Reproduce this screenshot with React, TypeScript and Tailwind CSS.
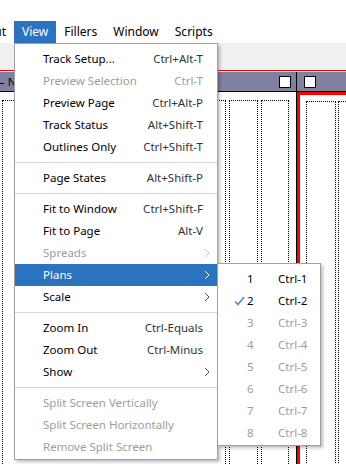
import React from 'react';

type Item =
  | { sep: true }
  | { label: string; keys?: string; disabled?: boolean; sub?: boolean; active?: boolean };

const viewItems: Item[] = [
  { label: 'Track Setup...', keys: 'Ctrl+Alt-T' },
  { label: 'Preview Selection', keys: 'Ctrl-T', disabled: true },
  { label: 'Preview Page', keys: 'Ctrl+Alt-P' },
  { label: 'Track Status', keys: 'Alt+Shift-T' },
  { label: 'Outlines Only', keys: 'Ctrl+Shift-T' },
  { sep: true },
  { label: 'Page States', keys: 'Alt+Shift-P' },
  { sep: true },
  { label: 'Fit to Window', keys: 'Ctrl+Shift-F' },
  { label: 'Fit to Page', keys: 'Alt-V' },
  { label: 'Spreads', sub: true, disabled: true },
  { label: 'Plans', sub: true, active: true },
  { label: 'Scale', sub: true },
  { sep: true },
  { label: 'Zoom In', keys: 'Ctrl-Equals' },
  { label: 'Zoom Out', keys: 'Ctrl-Minus' },
  { label: 'Show', sub: true },
  { sep: true },
  { label: 'Split Screen Vertically', disabled: true },
  { label: 'Split Screen Horizontally', disabled: true },
  { label: 'Remove Split Screen', disabled: true },
];

// plans submenu: 1 and 2 enabled, 2 is checked
const plans = [1, 2, 3, 4, 5, 6, 7, 8];

const Chevron = ({ color }: { color: string }) => (
  <svg width="6" height="10" viewBox="0 0 6 10" className="absolute right-[7px] top-[6px]">
    <path d="M1 1l4 4-4 4" fill="none" stroke={color} strokeWidth="1" />
  </svg>
);

const MenuRow = ({ item }: { item: Item }) => {
  if ('sep' in item) {
    return (
      <div className="h-[9px] flex items-center">
        <div className="h-px w-full bg-[#d7d7d7]" />
      </div>
    );
  }
  const text = item.active ? 'text-white' : item.disabled ? 'text-[#9d9d9d]' : 'text-black';
  const keyText = item.active ? 'text-white' : item.disabled ? 'text-[#9d9d9d]' : 'text-[#333333]';
  return (
    <div
      className={`relative h-[22px] flex items-center justify-between pl-[28px] pr-[14px] ${
        item.active ? 'bg-[#2b73bf]' : ''
      }`}
    >
      <span className={text}>{item.label}</span>
      {item.keys && <span className={keyText}>{item.keys}</span>}
      {item.sub && <Chevron color={item.active ? '#ffffff' : item.disabled ? '#c4c4c4' : '#555555'} />}
    </div>
  );
};

const DotCol = ({ w, className = '' }: { w: string; className?: string }) => (
  <div className={`${w} shrink-0 h-[400px] border-t border-l border-r border-dotted border-black ${className}`} />
);

export default function App() {
  return (
    <div
      className="relative w-[346px] h-[464px] overflow-hidden bg-white text-[11.5px] leading-none"
      style={{ fontFamily: '"Noto Sans", "Open Sans", sans-serif' }}
    >
      {/* title strip */}
      <div className="h-[21px] bg-white" />

      {/* menu bar */}
      <div className="h-[22px] flex items-center bg-white text-black text-[12px]">
        <div className="w-[14px] h-full overflow-hidden flex justify-end items-center pr-2">
          <span className="shrink-0">Layout</span>
        </div>
        <div className="h-full px-2 flex items-center bg-[#2b73bf] text-white">View</div>
        <div className="h-full px-2 flex items-center">Fillers</div>
        <div className="h-full px-2 flex items-center">Window</div>
        <div className="h-full px-2 flex items-center">Scripts</div>
      </div>

      {/* toolbar */}
      <div className="h-[27px] bg-[#f0f0f0]" />
      <div className="h-px bg-[#ff0000]" />
      <div className="h-px bg-[#f0f0f0]" />

      {/* page header bar */}
      <div className="h-[19px] bg-[#8080a0] flex items-center">
        <div className="w-[296px] h-full flex items-center justify-between pr-[5px]">
          <span className="-ml-[1px] text-black">– News</span>
          <div className="w-[12px] h-[12px] bg-white border border-black" />
        </div>
        <div className="w-px h-full bg-black" />
        <div className="h-full flex items-center pl-[7px]">
          <div className="w-[12px] h-[12px] bg-white border border-black" />
        </div>
      </div>
      <div className="h-px bg-black" />

      {/* canvas */}
      <div className="flex">
        <div className="w-[297px] shrink-0 h-[380px] border-r border-black pt-[8px] pl-[2px] flex gap-[3px]">
          <DotCol w="w-[224px]" className="flex justify-between px-[26px]" />
          <DotCol w="w-[29px]" />
          <DotCol w="w-[28px]" />
        </div>
        <div className="flex-1 h-[380px] border-l-[3px] border-t-[3px] border-[#ff0000] pt-[6px] pl-[6px] flex gap-[2px]">
          <DotCol w="w-[30px]" />
          <DotCol w="w-[30px]" />
        </div>
      </div>

      {/* View menu */}
      <div className="absolute left-[14px] top-[43px] w-[204px] bg-white border border-[#a0a0a0] pt-[4px] pb-[1px] shadow-[2px_2px_3px_rgba(0,0,0,0.25)]">
        {viewItems.map((it, i) => (
          <MenuRow key={i} item={it} />
        ))}
      </div>

      {/* Plans submenu */}
      <div className="absolute left-[217px] top-[263px] w-[104px] bg-white border border-[#a0a0a0] pt-[4px] pb-[1px] shadow-[2px_2px_3px_rgba(0,0,0,0.25)]">
        {plans.map((n) => {
          const on = n <= 2;
          return (
            <div key={n} className={`relative h-[22px] flex items-center ${on ? 'text-black' : 'text-[#9d9d9d]'}`}>
              <div className="w-[27px] flex justify-end">
                {n === 2 && (
                  <svg width="11" height="10" viewBox="0 0 11 10">
                    <path d="M1 5.5l3 3 6-7.5" fill="none" stroke="#3d8ee0" strokeWidth="1.6" />
                  </svg>
                )}
              </div>
              <span className="ml-[2px] w-[31px]">{n}</span>
              <span>Ctrl-{n}</span>
            </div>
          );
        })}
      </div>
    </div>
  );
}
